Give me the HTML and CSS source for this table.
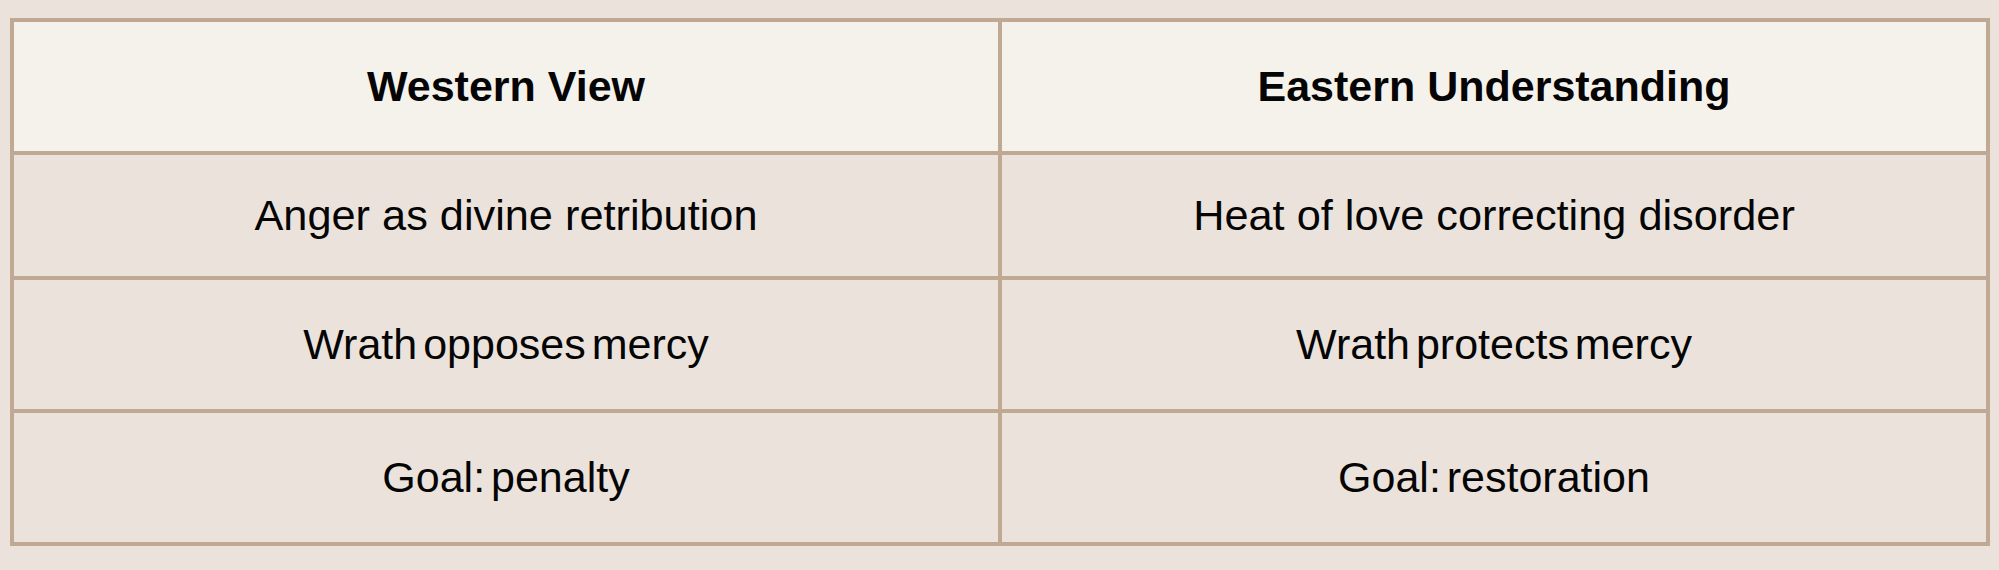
FILE: index.html
```html
<!DOCTYPE html>
<html lang="en">
<head>
<meta charset="utf-8">
<title>Western View vs Eastern Understanding</title>
<link rel="stylesheet" href="styles.css">
</head>
<body>
<div class="compare">
  <div class="cell head">Western View</div>
  <div class="cell head">Eastern Understanding</div>
  <div class="cell wide">Anger as divine retribution</div>
  <div class="cell wide">Heat of love correcting disorder</div>
  <div class="cell tight">Wrath opposes mercy</div>
  <div class="cell tight">Wrath protects mercy</div>
  <div class="cell tight">Goal: penalty</div>
  <div class="cell tight">Goal: restoration</div>
</div>
</body>
</html>
```

FILE: styles.css
```css
html, body {
  margin: 0;
  padding: 0;
  background: #ebe3db;
}
body {
  padding: 18px 9px 0 10px;
  font-family: "Liberation Sans", Arial, sans-serif;
  color: #050505;
}
.compare {
  width: 1980px;
  box-sizing: border-box;
  display: grid;
  grid-template-columns: 984px 984px;
  grid-template-rows: 129px 121px 129px 129px;
  gap: 4px;
  padding: 4px;
  background: #c0a992;
}
.cell {
  background: #ebe3db;
  display: flex;
  align-items: center;
  justify-content: center;
  font-size: 42px;
  line-height: 1;
}
.head {
  background: #f5f2ec;
  font-weight: bold;
  font-size: 43px;
}
.wide {
  font-size: 43.3px;
}
.tight {
  font-size: 43px;
  word-spacing: -6px;
}
```
